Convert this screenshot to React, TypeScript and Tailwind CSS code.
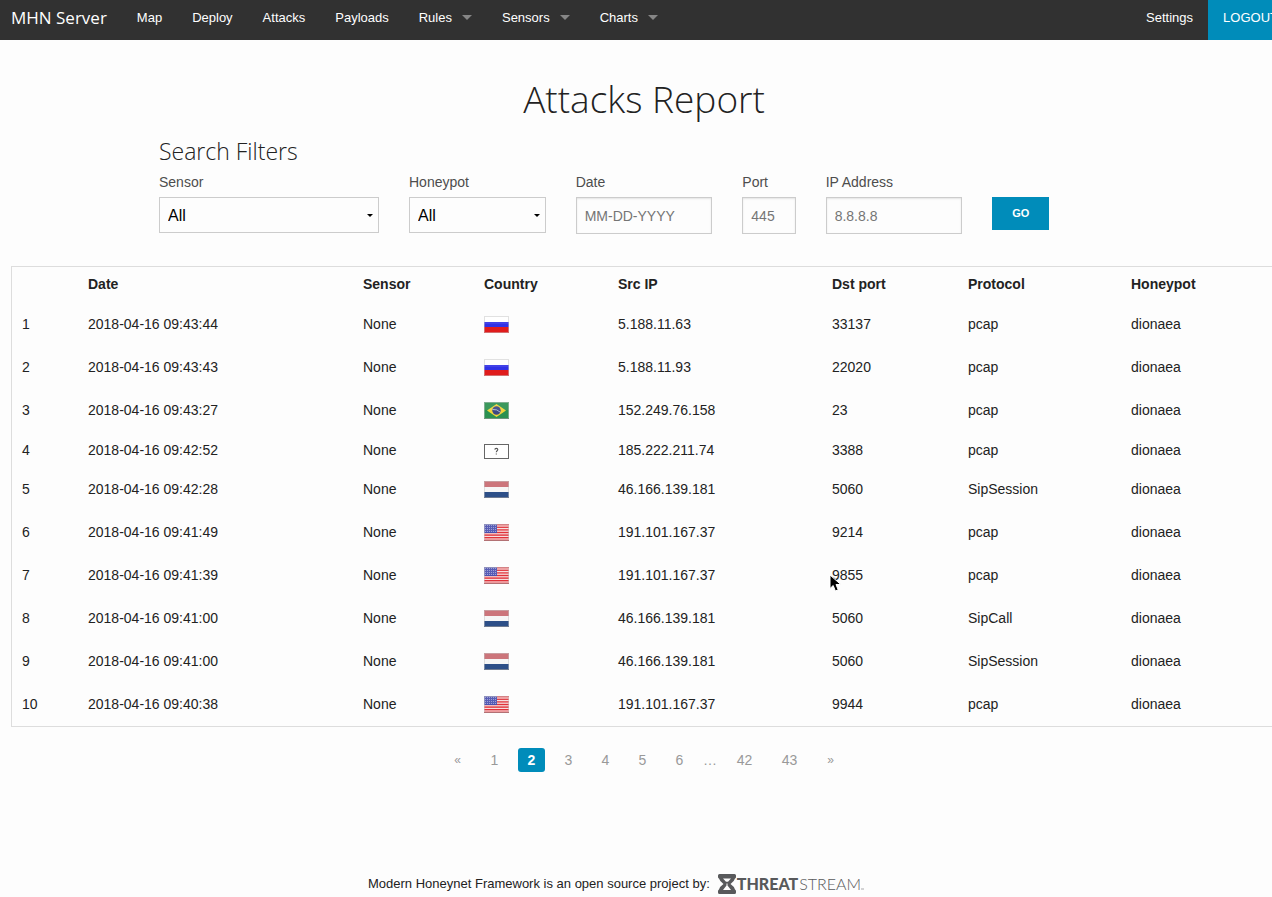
import type { ReactNode } from "react";

type FlagCode = "ru" | "br" | "unknown" | "nl" | "us";

type Attack = {
  date: string;
  flag: FlagCode;
  ip: string;
  port: string;
  protocol: string;
};

const attacks: Attack[] = [
  { date: "2018-04-16 09:43:44", flag: "ru", ip: "5.188.11.63", port: "33137", protocol: "pcap" },
  { date: "2018-04-16 09:43:43", flag: "ru", ip: "5.188.11.93", port: "22020", protocol: "pcap" },
  { date: "2018-04-16 09:43:27", flag: "br", ip: "152.249.76.158", port: "23", protocol: "pcap" },
  { date: "2018-04-16 09:42:52", flag: "unknown", ip: "185.222.211.74", port: "3388", protocol: "pcap" },
  { date: "2018-04-16 09:42:28", flag: "nl", ip: "46.166.139.181", port: "5060", protocol: "SipSession" },
  { date: "2018-04-16 09:41:49", flag: "us", ip: "191.101.167.37", port: "9214", protocol: "pcap" },
  { date: "2018-04-16 09:41:39", flag: "us", ip: "191.101.167.37", port: "9855", protocol: "pcap" },
  { date: "2018-04-16 09:41:00", flag: "nl", ip: "46.166.139.181", port: "5060", protocol: "SipCall" },
  { date: "2018-04-16 09:41:00", flag: "nl", ip: "46.166.139.181", port: "5060", protocol: "SipSession" },
  { date: "2018-04-16 09:40:38", flag: "us", ip: "191.101.167.37", port: "9944", protocol: "pcap" },
];

const flagNames: Record<FlagCode, string> = {
  ru: "Russia",
  br: "Brazil",
  unknown: "Unknown country",
  nl: "Netherlands",
  us: "United States",
};

function Stripes({ colors }: { colors: [string, string, string] }) {
  return (
    <>
      <rect x="0" y="4" width="25" height="6" fill={colors[0]} />
      <rect x="0" y="10" width="25" height="5" fill={colors[1]} />
      <rect x="0" y="15" width="25" height="6" fill={colors[2]} />
    </>
  );
}

function Flag({ code }: { code: FlagCode }) {
  if (code === "unknown") {
    return (
      <svg role="img" aria-label={flagNames[code]} width="25" height="15" viewBox="0 0 25 15" className="mt-[3px] block">
        <rect x="0.5" y="0.5" width="24" height="14" fill="#fff" stroke="#666" />
        <path d="M10.8 5.6c.1-1.6 3-1.6 3 0 0 1.2-1.5 1.1-1.5 2.7M12.3 9.5v1.1" fill="none" stroke="#555" strokeWidth="1.1" />
      </svg>
    );
  }
  return (
    <svg role="img" aria-label={flagNames[code]} width="25" height="25" viewBox="0 0 25 25" className="block">
      {code === "ru" && <Stripes colors={["#ffffff", "#3131e6", "#e01c1c"]} />}
      {code === "nl" && <Stripes colors={["#c86a70", "#f6f6f6", "#2d4f88"]} />}
      {code === "br" && (
        <>
          <rect y="4" width="25" height="17" fill="#2b9150" />
          <path d="M12.5 6 22 12.5 12.5 19 3 12.5Z" fill="#f0d43a" />
          <circle cx="12.5" cy="12.5" r="4.2" fill="#3d4784" />
          <path d="M8.6 11.5Q13 11 16.3 14.2" fill="none" stroke="#b9c6dc" strokeWidth="0.9" />
        </>
      )}
      {code === "us" && (
        <>
          <rect y="4" width="25" height="17" fill="#f7dede" />
          {[4, 6.6, 9.2, 11.8, 14.4, 17, 19.6].map((y) => (
            <rect key={y} y={y} width="25" height="1.4" fill="#e0323a" />
          ))}
          <rect y="4" width="13" height="9" fill="#4a50b0" />
          {[5.5, 7.5, 9.5, 11.5].map((y) => (
            <path key={y} d={`M1 ${y}H12.5`} stroke="#a9add9" strokeWidth="0.8" strokeDasharray="1 1" />
          ))}
        </>
      )}
      <rect x="0" y="4" width="25" height="8" fill="#fff" opacity="0.08" />
      <rect x="0.5" y="4.5" width="24" height="16" fill="none" stroke="#c4c4c4" strokeOpacity="0.5" />
      {code !== "ru" && <path d="M0 20.5H25" stroke="#555" strokeOpacity="0.25" />}
    </svg>
  );
}

function Pointer() {
  return (
    <svg aria-hidden="true" width="13" height="19" viewBox="0 0 13 19" className="pointer-events-none absolute top-[20px] left-[7px]">
      <path d="M1 1v13.5l3.2-3 2.2 5.5 2.8-1.2L7 10.5h4.8Z" fill="#000" stroke="#fff" strokeWidth="1" />
    </svg>
  );
}

function NavItem({ children, menu = false }: { children: ReactNode; menu?: boolean }) {
  return (
    <li>
      <a href="#" className="flex h-10 items-center gap-[10px] px-[15px] pb-[5px]">
        {children}
        {menu && (
          <svg aria-hidden="true" width="10" height="5" viewBox="0 0 10 5">
            <path d="M0 0h10L5 5Z" fill="#868686" />
          </svg>
        )}
      </a>
    </li>
  );
}

function Filter({ id, label, span, children }: { id: string; label: string; span: string; children: ReactNode }) {
  return (
    <div className={`${span} px-[15px]`}>
      <label htmlFor={id} className="block h-[25px] text-sm leading-[21px] whitespace-nowrap text-[#4d4d4d]">
        {label}
      </label>
      {children}
    </div>
  );
}

function SelectBox({ id }: { id: string }) {
  return (
    <div className="relative">
      <select id={id} className="block h-9 w-full appearance-none border border-[#ccc] bg-[#fdfdfd] px-2 pt-0.5 text-base text-black">
        <option>All</option>
      </select>
      <svg aria-hidden="true" width="6" height="3" viewBox="0 0 6 3" className="pointer-events-none absolute top-[17px] right-[6px]">
        <path d="M0 0h6L3 3Z" fill="#000" />
      </svg>
    </div>
  );
}

function TextBox({ id, placeholder }: { id: string; placeholder: string }) {
  return (
    <input
      id={id}
      type="text"
      placeholder={placeholder}
      className="block h-[37px] w-full border border-[#ccc] bg-[#fdfdfd] px-2 text-sm shadow-[inset_0_1px_2px_rgba(0,0,0,0.1)] placeholder:text-[#757575]"
    />
  );
}

function PageLink({ children, wide = false, current = false }: { children: ReactNode; wide?: boolean; current?: boolean }) {
  return (
    <li>
      <a
        href="#"
        aria-current={current ? "page" : undefined}
        className={`flex h-6 items-center justify-center rounded-[3px] ${wide ? "w-[35px]" : "w-[27px]"} ${current ? "bg-[#008cba] font-bold text-white" : "text-[#999]"}`}
      >
        {children}
      </a>
    </li>
  );
}

function ThreatStreamLogo() {
  return (
    <a href="#" aria-label="ThreatStream" className="flex items-center text-[#58595b]">
      <svg aria-hidden="true" width="18" height="20" viewBox="0 0 18 20">
        <path
          fillRule="evenodd"
          fill="#58595b"
          d="M1.5 0h15Q18 0 18 1.5V3Q18 4 17 4.5 16.200 7.500 12.500 10 16.200 12.500 17 15.500 18 16 18 17v1.500Q18 20 16.500 20h-15Q0 20 0 18.500V17Q0 16 1 15.500 1.800 12.500 5.500 10 1.800 7.500 1 4.500 0 4 0 3V1.500Q0 0 1.500 0ZM5 4.500 8 7.800H10L13 4.500ZM8.500 9.500V11.500L5 16H13L9.500 11.500V9.500Z"
        />
      </svg>
      <span className="pl-px font-[Lato,sans-serif] text-base leading-5 font-black">THREAT</span>
      <span className="pl-px font-[Lato,sans-serif] text-base leading-5 font-light">STREAM</span>
      <svg aria-hidden="true" width="3" height="12" viewBox="0 0 3 12">
        <path d="M0 11h3" stroke="#58595b" strokeOpacity="0.5" />
      </svg>
    </a>
  );
}

export default function App() {
  return (
    <div className="min-h-screen overflow-x-hidden bg-[#fdfdfd] font-['Liberation_Sans',Arial,sans-serif] text-[#222]">
      <nav className="flex h-10 w-[calc(100%+21px)] justify-between bg-[#313131] text-[13px] text-white">
        <ul className="flex">
          <li>
            <a href="#" className="flex h-10 items-center pr-[15px] pb-[5px] pl-[11px] font-['Open_Sans',sans-serif] text-[17px]">
              MHN Server
            </a>
          </li>
          <NavItem>Map</NavItem>
          <NavItem>Deploy</NavItem>
          <NavItem>Attacks</NavItem>
          <NavItem>Payloads</NavItem>
          <NavItem menu>Rules</NavItem>
          <NavItem menu>Sensors</NavItem>
          <NavItem menu>Charts</NavItem>
        </ul>
        <ul className="flex">
          <NavItem>Settings</NavItem>
          <li className="bg-[#008cba]">
            <a href="#" className="flex h-10 items-center px-[15px] pb-[5px]">
              LOGOUT
            </a>
          </li>
        </ul>
      </nav>

      <main className="w-[calc(100%+16px)]">
        <h1 className="pt-[33px] text-center font-['Open_Sans',sans-serif] text-[37px] leading-[52px] font-light">
          Attacks Report
        </h1>

        <form className="mx-auto max-w-[1000px] pt-[10px]">
          <h2 className="px-[15px] font-['Open_Sans',sans-serif] text-[23px] leading-8 font-light">Search Filters</h2>
          <div className="grid grid-cols-12 pt-[5px]">
            <Filter id="sensor" label="Sensor" span="col-span-3">
              <SelectBox id="sensor" />
            </Filter>
            <Filter id="honeypot" label="Honeypot" span="col-span-2">
              <SelectBox id="honeypot" />
            </Filter>
            <Filter id="date" label="Date" span="col-span-2">
              <TextBox id="date" placeholder="MM-DD-YYYY" />
            </Filter>
            <Filter id="port" label="Port" span="col-span-1">
              <TextBox id="port" placeholder="445" />
            </Filter>
            <Filter id="ip" label="IP Address" span="col-span-2">
              <TextBox id="ip" placeholder="8.8.8.8" />
            </Filter>
            <div className="col-span-2 px-[15px] pt-[25px]">
              <button type="button" className="block h-[33px] w-[57px] bg-[#008cba] text-[11px] font-bold text-white">
                GO
              </button>
            </div>
          </div>
        </form>

        <div className="px-[11px] pt-8">
          <div className="border border-[#ddd]">
            <table className="w-full table-fixed text-left text-sm leading-[18px]">
              <colgroup>
                <col className="w-[66px]" />
                <col className="w-[275px]" />
                <col className="w-[121px]" />
                <col className="w-[134px]" />
                <col className="w-[214px]" />
                <col className="w-[136px]" />
                <col className="w-[163px]" />
                <col />
              </colgroup>
              <thead>
                <tr>
                  {["", "Date", "Sensor", "Country", "Src IP", "Dst port", "Protocol", "Honeypot"].map((title) => (
                    <th key={title} scope="col" className="px-[10px] pt-2 pb-[10px] font-bold">
                      {title}
                    </th>
                  ))}
                </tr>
              </thead>
              <tbody>
                {attacks.map((attack, i) => (
                  <tr key={i}>
                    <td className="px-[10px] pt-2 pb-[9px]">{i + 1}</td>
                    <td className="px-[10px] pt-2 pb-[9px]">{attack.date}</td>
                    <td className="px-[10px] pt-2 pb-[9px]">None</td>
                    <td className="px-[10px] py-[9px]">
                      <Flag code={attack.flag} />
                    </td>
                    <td className="px-[10px] pt-2 pb-[9px]">{attack.ip}</td>
                    <td className="relative px-[10px] pt-2 pb-[9px]">
                      {attack.port}
                      {i === 6 && <Pointer />}
                    </td>
                    <td className="px-[10px] pt-2 pb-[9px]">{attack.protocol}</td>
                    <td className="px-[10px] pt-2 pb-[9px]">dionaea</td>
                  </tr>
                ))}
              </tbody>
            </table>
          </div>
        </div>

        <nav aria-label="Pages">
          <ul className="flex justify-center gap-[10px] pt-[21px] text-sm">
            <PageLink>
              <span className="text-xs">«</span>
            </PageLink>
            <PageLink>1</PageLink>
            <PageLink current>2</PageLink>
            <PageLink>3</PageLink>
            <PageLink>4</PageLink>
            <PageLink>5</PageLink>
            <PageLink>6</PageLink>
            <li className="flex h-6 items-center text-[#999]">…</li>
            <PageLink wide>42</PageLink>
            <PageLink wide>43</PageLink>
            <PageLink>
              <span className="text-xs">»</span>
            </PageLink>
          </ul>
        </nav>
      </main>

      <footer className="flex items-center justify-center gap-2 pt-[102px] pr-10 text-[13px]">
        <p>Modern Honeynet Framework is an open source project by:</p>
        <ThreatStreamLogo />
      </footer>
    </div>
  );
}
